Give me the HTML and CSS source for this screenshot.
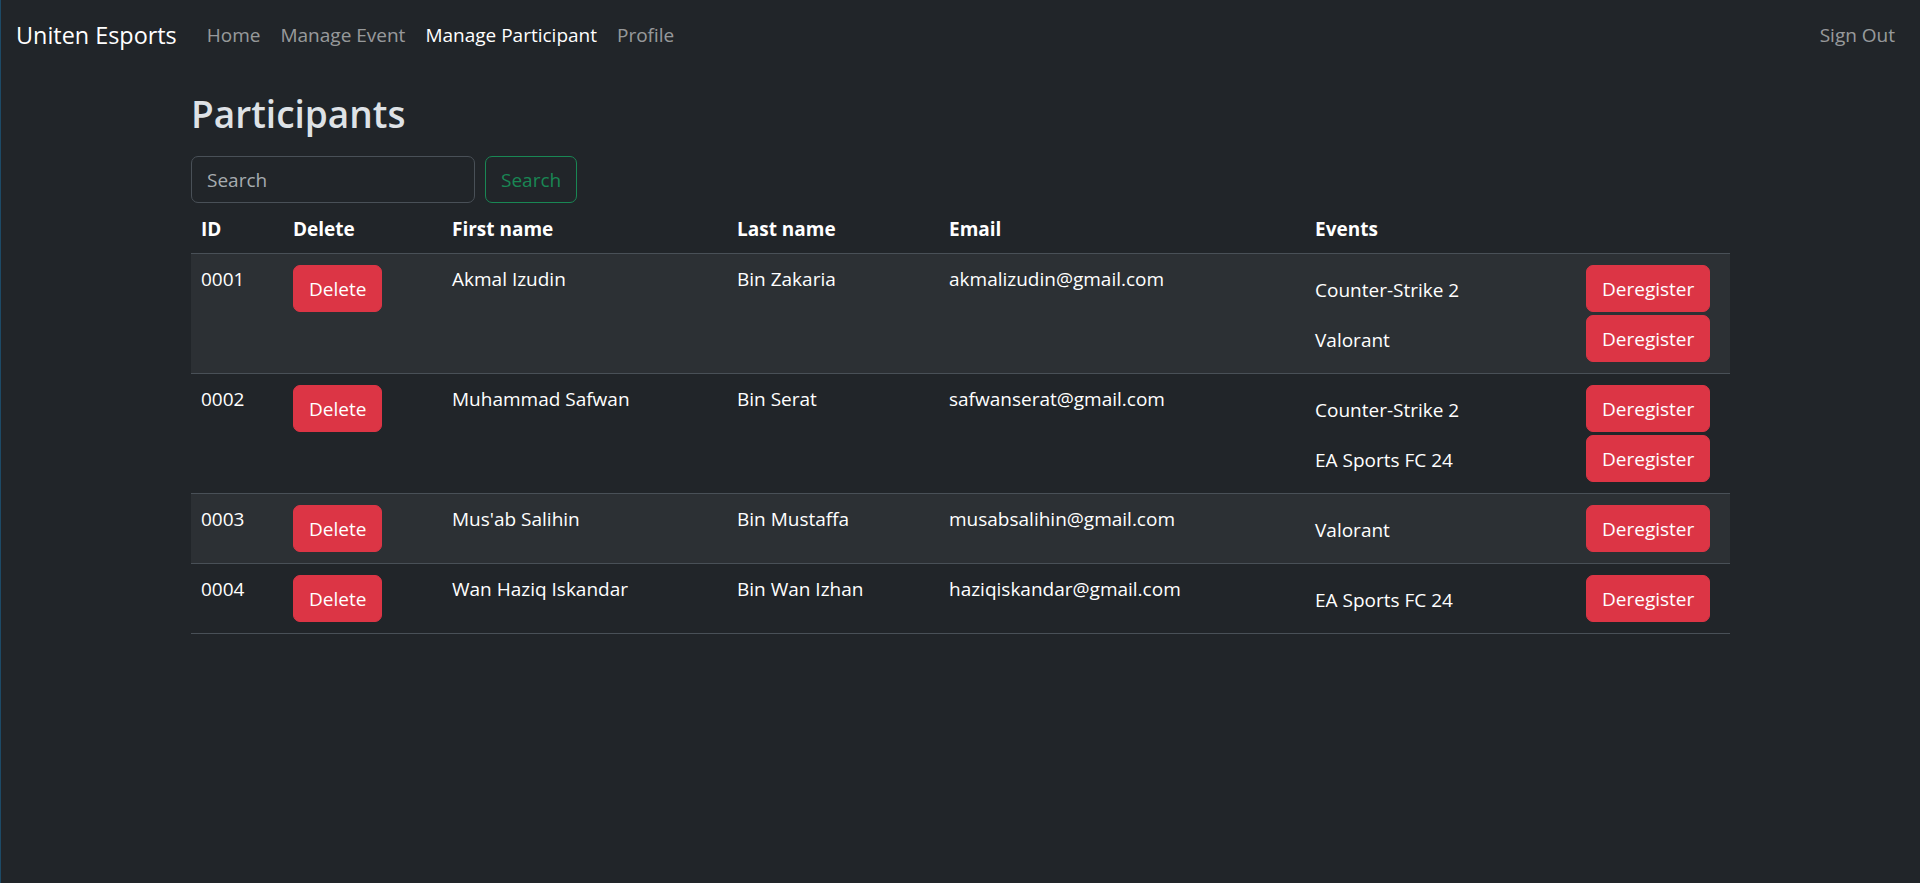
FILE: index.html
```html
<!DOCTYPE html>
<html lang="en">
<head>
<meta charset="utf-8">
<title>Participants - Uniten Esports</title>
<link rel="stylesheet" href="styles.css">
</head>
<body>
<nav class="navbar">
  <a class="brand" href="#">Uniten Esports</a>
  <ul class="nav-links">
    <li><a class="nav-link" href="#">Home</a></li>
    <li><a class="nav-link" href="#">Manage Event</a></li>
    <li><a class="nav-link active" href="#">Manage Participant</a></li>
    <li><a class="nav-link" href="#">Profile</a></li>
  </ul>
  <a class="nav-link signout" href="#">Sign Out</a>
</nav>
<main class="container">
  <h2 class="title">Participants</h2>
  <form class="search-form">
    <input class="search-input" type="search" placeholder="Search">
    <button class="btn btn-outline-success" type="button">Search</button>
  </form>
  <table class="table">
    <colgroup>
      <col class="c-id"><col class="c-del"><col class="c-first"><col class="c-last"><col class="c-email"><col class="c-events">
    </colgroup>
    <thead>
      <tr><th>ID</th><th>Delete</th><th>First name</th><th>Last name</th><th>Email</th><th>Events</th></tr>
    </thead>
    <tbody>
      <tr class="striped">
        <td>0001</td>
        <td><button class="btn btn-danger" type="button">Delete</button></td>
        <td>Akmal Izudin</td>
        <td>Bin Zakaria</td>
        <td>akmalizudin@gmail.com</td>
        <td>
          <div class="events">
            <div class="event"><span>Counter-Strike 2</span><button class="btn btn-danger" type="button">Deregister</button></div>
            <div class="event"><span>Valorant</span><button class="btn btn-danger" type="button">Deregister</button></div>
          </div>
        </td>
      </tr>
      <tr>
        <td>0002</td>
        <td><button class="btn btn-danger" type="button">Delete</button></td>
        <td>Muhammad Safwan</td>
        <td>Bin Serat</td>
        <td>safwanserat@gmail.com</td>
        <td>
          <div class="events">
            <div class="event"><span>Counter-Strike 2</span><button class="btn btn-danger" type="button">Deregister</button></div>
            <div class="event"><span>EA Sports FC 24</span><button class="btn btn-danger" type="button">Deregister</button></div>
          </div>
        </td>
      </tr>
      <tr class="striped">
        <td>0003</td>
        <td><button class="btn btn-danger" type="button">Delete</button></td>
        <td>Mus'ab Salihin</td>
        <td>Bin Mustaffa</td>
        <td>musabsalihin@gmail.com</td>
        <td>
          <div class="events">
            <div class="event"><span>Valorant</span><button class="btn btn-danger" type="button">Deregister</button></div>
          </div>
        </td>
      </tr>
      <tr>
        <td>0004</td>
        <td><button class="btn btn-danger" type="button">Delete</button></td>
        <td>Wan Haziq Iskandar</td>
        <td>Bin Wan Izhan</td>
        <td>haziqiskandar@gmail.com</td>
        <td>
          <div class="events">
            <div class="event"><span>EA Sports FC 24</span><button class="btn btn-danger" type="button">Deregister</button></div>
          </div>
        </td>
      </tr>
    </tbody>
  </table>
</main>
</body>
</html>
```

FILE: styles.css
```css
* { box-sizing: border-box; }

html, body { height: 100%; }

body {
  margin: 0;
  background: #212529;
  color: #dee2e6;
  font-family: "Open Sans", "Noto Sans", "Liberation Sans", sans-serif;
  font-size: 19px;
  line-height: 30px;
  border-left: 1px solid #1d4a66;
}

a { text-decoration: none; }

.navbar {
  display: flex;
  align-items: center;
  height: 70px;
  padding: 10px 15px 10px 15px;
}

.brand {
  color: #fff;
  font-size: 23.4px;
  line-height: 37px;
  padding: 6px 0;
  margin-right: 20px;
}

.nav-links {
  display: flex;
  list-style: none;
  margin: 0;
  padding: 0;
  flex: 1;
}

.nav-link {
  display: block;
  padding: 10px 10px;
  color: rgba(255, 255, 255, 0.55);
}

.nav-link.active { color: #fff; }

.signout { padding-right: 10px; }

.container {
  max-width: 1539px;
  margin: 20px auto 0;
}

.title {
  margin: 0 0 18px;
  font-size: 37px;
  line-height: 48px;
  font-weight: 600;
  color: #dee2e6;
}

.search-form {
  display: flex;
  gap: 10px;
}

.search-input {
  width: 284px;
  height: 47px;
  padding: 7px 15px;
  background: #212529;
  border: 1px solid #495057;
  border-radius: 7px;
  color: #dee2e6;
  font: inherit;
  outline: none;
}

.search-input::placeholder { color: rgba(222, 226, 230, 0.72); }

.btn {
  display: inline-block;
  height: 47px;
  padding: 7px 15px;
  border: 1px solid transparent;
  border-radius: 7px;
  font: inherit;
  line-height: 30px;
  cursor: pointer;
  white-space: nowrap;
}

.btn-outline-success {
  background: transparent;
  border-color: #198754;
  color: #198754;
}

.btn-danger {
  background: #dc3545;
  border-color: #dc3545;
  color: #fff;
}

.table {
  width: 1539px;
  table-layout: fixed;
  border-collapse: collapse;
  color: #fff;
}

.c-id { width: 92px; }
.c-del { width: 159px; }
.c-first { width: 285px; }
.c-last { width: 212px; }
.c-email { width: 366px; }
.c-events { width: 425px; }

.table th,
.table td {
  padding: 10px;
  text-align: left;
  vertical-align: top;
  border-bottom: 1px solid #495057;
}

.table th { font-weight: 700; padding-top: 11px; padding-bottom: 9px; }

.table tr.striped td { background: #2c3034; }

.table td > .btn { margin-top: 1px; }

.events {
  display: flex;
  flex-direction: column;
  gap: 1px;
}

.event {
  display: grid;
  grid-template-columns: 271px auto;
  align-items: center;
  justify-items: start;
  padding: 1px 0;
}

.event span { padding-top: 2px; }
```
